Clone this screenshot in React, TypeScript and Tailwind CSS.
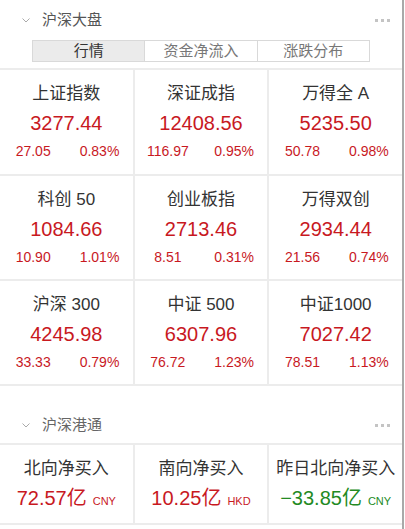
import React from "react";

const FONT = { fontFamily: '"Liberation Sans", "Noto Sans CJK SC", sans-serif' };

type Idx = { name: string; value: string; chg: string; pct: string };

const indices: Idx[] = [
  { name: "上证指数", value: "3277.44", chg: "27.05", pct: "0.83%" },
  { name: "深证成指", value: "12408.56", chg: "116.97", pct: "0.95%" },
  { name: "万得全 A", value: "5235.50", chg: "50.78", pct: "0.98%" },
  { name: "科创 50", value: "1084.66", chg: "10.90", pct: "1.01%" },
  { name: "创业板指", value: "2713.46", chg: "8.51", pct: "0.31%" },
  { name: "万得双创", value: "2934.44", chg: "21.56", pct: "0.74%" },
  { name: "沪深 300", value: "4245.98", chg: "33.33", pct: "0.79%" },
  { name: "中证 500", value: "6307.96", chg: "76.72", pct: "1.23%" },
  { name: "中证1000", value: "7027.42", chg: "78.51", pct: "1.13%" },
];

function Chevron() {
  return (
    <svg width="8" height="5" viewBox="0 0 8 5" className="block">
      <path d="M0.5 0.5 L4 4 L7.5 0.5" fill="none" stroke="#aaaaaa" strokeWidth="1" />
    </svg>
  );
}

function Dots() {
  return (
    <div className="flex gap-[3px]">
      <div className="w-[3px] h-[3px] bg-[#c4c4c4]" />
      <div className="w-[3px] h-[3px] bg-[#c4c4c4]" />
      <div className="w-[3px] h-[3px] bg-[#c4c4c4]" />
    </div>
  );
}

function SectionTitle({ title, color }: { title: string; color: string }) {
  return (
    <div className="flex items-center h-[20px]">
      <div className="w-[22px]" />
      <Chevron />
      <div className="w-[12px]" />
      <div className={`text-[15px] leading-[20px] ${color}`}>{title}</div>
      <div className="flex-1" />
      <Dots />
      <div className="w-[12px]" />
    </div>
  );
}

function IndexCell({ d }: { d: Idx }) {
  return (
    <div className="bg-white flex flex-col items-center pt-[13px]">
      <div className="text-[17px] leading-[22px] text-[#333333]">{d.name}</div>
      <div className="mt-[5px] text-[20px] leading-[26px] text-[#c8191f]">{d.value}</div>
      <div className="mt-[6px] flex w-full text-[14px] leading-[18px] text-[#c8191f]">
        <div className="flex-1 text-center">{d.chg}</div>
        <div className="flex-1 text-center">{d.pct}</div>
      </div>
    </div>
  );
}

function FlowCell({ name, value, unit, color }: { name: string; value: string; unit: string; color: string }) {
  return (
    <div className="bg-white flex flex-col items-center pt-[13px]">
      <div className="text-[17px] leading-[22px] text-[#333333] whitespace-nowrap">{name}</div>
      <div className={`mt-[5px] flex items-baseline leading-[26px] ${color}`}>
        <span className="text-[20px]">{value}</span>
        <span className="ml-[6px] text-[11px]">{unit}</span>
      </div>
    </div>
  );
}

export default function App() {
  return (
    <div className="flex w-[405px] min-h-[529px] bg-white" style={FONT}>
      <div className="w-[402px] flex flex-col">
        {/* Section 1 */}
        <div className="pt-[10px] h-[68px]">
          <SectionTitle title="沪深大盘" color="text-[#555555]" />
          <div className="mt-[10px] ml-[32px] w-[338px] h-[22px] flex border border-[#d9d9d9] text-[15px] leading-[20px]">
            <div className="flex-1 bg-[#ebebeb] text-[#333333] text-center">行情</div>
            <div className="flex-1 border-l border-[#d9d9d9] text-[#777777] text-center">资金净流入</div>
            <div className="flex-1 border-l border-[#d9d9d9] text-[#777777] text-center">涨跌分布</div>
          </div>
        </div>
        <div className="grid grid-cols-3 grid-rows-[104px_103px_103px] gap-[2px] py-[2px] bg-[#ececec]">
          {indices.map((d) => (
            <IndexCell key={d.name} d={d} />
          ))}
        </div>

        {/* Section 2 */}
        <div className="pt-[29px] pb-[8px]">
          <SectionTitle title="沪深港通" color="text-[#666666]" />
        </div>
        <div className="grid grid-cols-3 grid-rows-[78px] gap-[2px] py-[2px] bg-[#ececec]">
          <FlowCell name="北向净买入" value="72.57亿" unit="CNY" color="text-[#c8191f]" />
          <FlowCell name="南向净买入" value="10.25亿" unit="HKD" color="text-[#c8191f]" />
          <FlowCell name="昨日北向净买入" value="−33.85亿" unit="CNY" color="text-[#238a23]" />
        </div>
        <div className="flex-1" />
      </div>
      <div className="w-[2px] bg-[#a9a9a9]" />
      <div className="w-[1px]" />
    </div>
  );
}
